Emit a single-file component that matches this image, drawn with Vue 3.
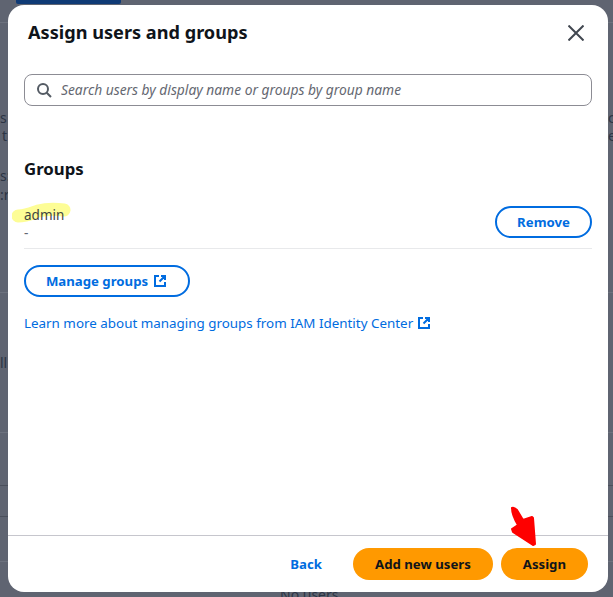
<template>
  <div class="page">
    <!-- dimmed page behind the modal -->
    <div class="backdrop">
      <div class="tab-bar"></div>
      <div class="bg-line" style="top: 22px"></div>
      <div class="bg-line" style="top: 292px"></div>
      <div class="bg-line" style="top: 432px"></div>
      <div class="bg-line dark" style="top: 485px"></div>
      <div class="bg-line dark" style="top: 516px"></div>
      <div class="bg-line" style="top: 561px"></div>
      <span class="bg-text" style="left: 0; top: 110px">s</span>
      <span class="bg-text" style="left: 2px; top: 128px">t</span>
      <span class="bg-text" style="left: 0; top: 168px">s:</span>
      <span class="bg-text" style="left: 0; top: 187px">:r</span>
      <span class="bg-text" style="left: 0; top: 355px">ll</span>
      <span class="bg-text" style="left: 608px; top: 110px">c</span>
      <span class="bg-text" style="left: 608px; top: 128px">e</span>
      <span class="bg-text" style="left: 280px; top: 587px">No users</span>
    </div>

    <div class="modal">
      <div class="modal-header">
        <h2 class="modal-title">Assign users and groups</h2>
        <button class="close-btn" aria-label="Close">
          <svg width="16" height="16" viewBox="0 0 16 16"><path d="M0.5 0.5 15.5 15.5M15.5 0.5 0.5 15.5" fill="none" stroke="#414750" stroke-width="2"/></svg>
        </button>
      </div>

      <div class="modal-body">
        <div class="search">
          <svg class="search-icon" width="16" height="16" viewBox="0 0 16 16"><circle cx="7" cy="7" r="5" fill="none" stroke="#545b64" stroke-width="2"/><path d="M10.7 10.7 15 15" fill="none" stroke="#545b64" stroke-width="2"/></svg>
          <input class="search-input" type="text" placeholder="Search users by display name or groups by group name">
        </div>

        <h3 class="section-title">Groups</h3>

        <div class="group-row">
          <div class="group-info">
            <div class="group-name">
              <svg class="highlight" width="62" height="24" viewBox="0 0 62 24"><path d="M6 14C14 14 18 12 26 9 34 7 44 7 52 8" fill="none" stroke="#fdfd96" stroke-width="13" stroke-linecap="round"/></svg>
              <span>admin</span>
            </div>
            <div class="group-desc">-</div>
          </div>
          <button class="btn btn-outline">Remove</button>
        </div>

        <button class="btn btn-outline manage-btn">
          Manage groups
          <svg class="ext" width="12" height="12" viewBox="0 0 12 12"><path d="M5 1H1V11H11V7M7 1H11V5M11 1 5.5 6.5" fill="none" stroke="#006ce0" stroke-width="2"/></svg>
        </button>

        <a class="learn-link" href="#">
          Learn more about managing groups from IAM Identity Center
          <svg class="ext" width="12" height="12" viewBox="0 0 12 12"><path d="M5 1H1V11H11V7M7 1H11V5M11 1 5.5 6.5" fill="none" stroke="#006ce0" stroke-width="2"/></svg>
        </a>
      </div>

      <div class="modal-footer">
        <button class="btn btn-link">Back</button>
        <button class="btn btn-primary">Add new users</button>
        <button class="btn btn-primary assign-btn">Assign</button>
      </div>
    </div>

    <!-- red annotation arrow -->
    <svg class="arrow" width="32" height="46" viewBox="0 0 32 46">
      <path d="M4 3C6 2 8 4 9 5L15 15 24 12 25 13 27 39 25 40 5 27 4 24 10 20C7 15 4 8 4 3Z" fill="#fe0000" stroke="#fe0000" stroke-width="2" stroke-linejoin="round"/>
    </svg>
  </div>
</template>

<script setup>
</script>

<style>
html, body {
  margin: 0;
  background: #5f6471;
}
</style>

<style scoped>
.page {
  position: relative;
  width: 613px;
  height: 597px;
  overflow: hidden;
  background: #5f6471;
  font-family: "Noto Sans", "Open Sans", sans-serif;
}

.tab-bar {
  position: absolute;
  left: 16px;
  top: 0;
  width: 105px;
  height: 4px;
  background: #0f3a75;
  border-radius: 0 0 2px 2px;
}

.bg-line {
  position: absolute;
  left: 0;
  right: 0;
  height: 1px;
  background: #6d727e;
}

.bg-line.dark {
  background: #4b505c;
}

.bg-text {
  position: absolute;
  font-size: 14px;
  line-height: 16px;
  color: #2c3444;
}

.modal {
  position: absolute;
  left: 8px;
  top: 5px;
  width: 600px;
  height: 587px;
  display: flex;
  flex-direction: column;
  background: #fff;
  border-radius: 16px;
  overflow: hidden;
}

.modal-header {
  display: flex;
  justify-content: space-between;
  align-items: center;
  padding: 14px 24px 0 20px;
  height: 27px;
}

.modal-title {
  margin: 0;
  font-size: 18.15px;
  line-height: 27px;
  font-weight: 700;
  color: #0f141a;
}

.close-btn {
  display: flex;
  padding: 0;
  border: none;
  background: none;
}

.modal-body {
  flex: 1;
  display: flex;
  flex-direction: column;
  align-items: flex-start;
  padding: 28px 16px 0;
}

.search {
  position: relative;
  width: 100%;
  box-sizing: border-box;
}

.search-icon {
  position: absolute;
  left: 12px;
  top: 8px;
}

.search-input {
  display: block;
  width: 100%;
  height: 32px;
  box-sizing: border-box;
  padding: 0 12px 1px 36px;
  border: 1px solid #8c8c94;
  border-radius: 8px;
  background: #fff;
  font-family: inherit;
  font-size: 13.8px;
  outline: none;
}

.search-input::placeholder {
  color: #656871;
  font-style: italic;
  opacity: 1;
}

.section-title {
  margin: 51px 0 0;
  font-size: 16.8px;
  line-height: 24px;
  font-weight: 700;
  color: #0f141a;
}

.group-row {
  width: 100%;
  display: flex;
  justify-content: space-between;
  align-items: center;
  box-sizing: border-box;
  margin-top: 20px;
  height: 48px;
  padding-bottom: 5px;
  border-bottom: 1px solid #e8e9eb;
}

.group-info {
  padding-top: 4px;
}

.group-name {
  position: relative;
  font-size: 13.5px;
  line-height: 18px;
  color: #3f4540;
}

.group-name span {
  position: relative;
}

.highlight {
  position: absolute;
  left: -12px;
  top: -4px;
}

.group-desc {
  font-size: 13.5px;
  line-height: 18px;
  color: #656871;
}

.btn {
  display: inline-flex;
  align-items: center;
  justify-content: center;
  box-sizing: border-box;
  height: 32px;
  border-radius: 20px;
  font-family: inherit;
  font-size: 13.2px;
  font-weight: 700;
  white-space: nowrap;
}

.btn-outline {
  width: 97px;
  border: 2px solid #006ce0;
  background: #fff;
  color: #006ce0;
}

.manage-btn {
  width: 166px;
  margin-top: 16px;
  padding: 0 2px 0 0;
  gap: 6px;
}

.learn-link {
  display: flex;
  align-items: center;
  gap: 5px;
  margin-top: 17px;
  font-size: 13.4px;
  line-height: 18px;
  color: #006ce0;
  text-decoration: none;
}

.modal-footer {
  display: flex;
  justify-content: flex-end;
  align-items: center;
  gap: 8px;
  height: 56px;
  padding: 0 20px 0 0;
  border-top: 1px solid #c6c6cd;
}

.btn-link {
  width: 62px;
  margin-right: 8px;
  border: none;
  background: none;
  color: #006ce0;
}

.btn-primary {
  border: none;
  background: #ff9900;
  color: #0f141a;
  padding: 0 22px;
}

.assign-btn {
  padding: 0 22px;
}

.arrow {
  position: absolute;
  left: 508px;
  top: 505px;
}
</style>
